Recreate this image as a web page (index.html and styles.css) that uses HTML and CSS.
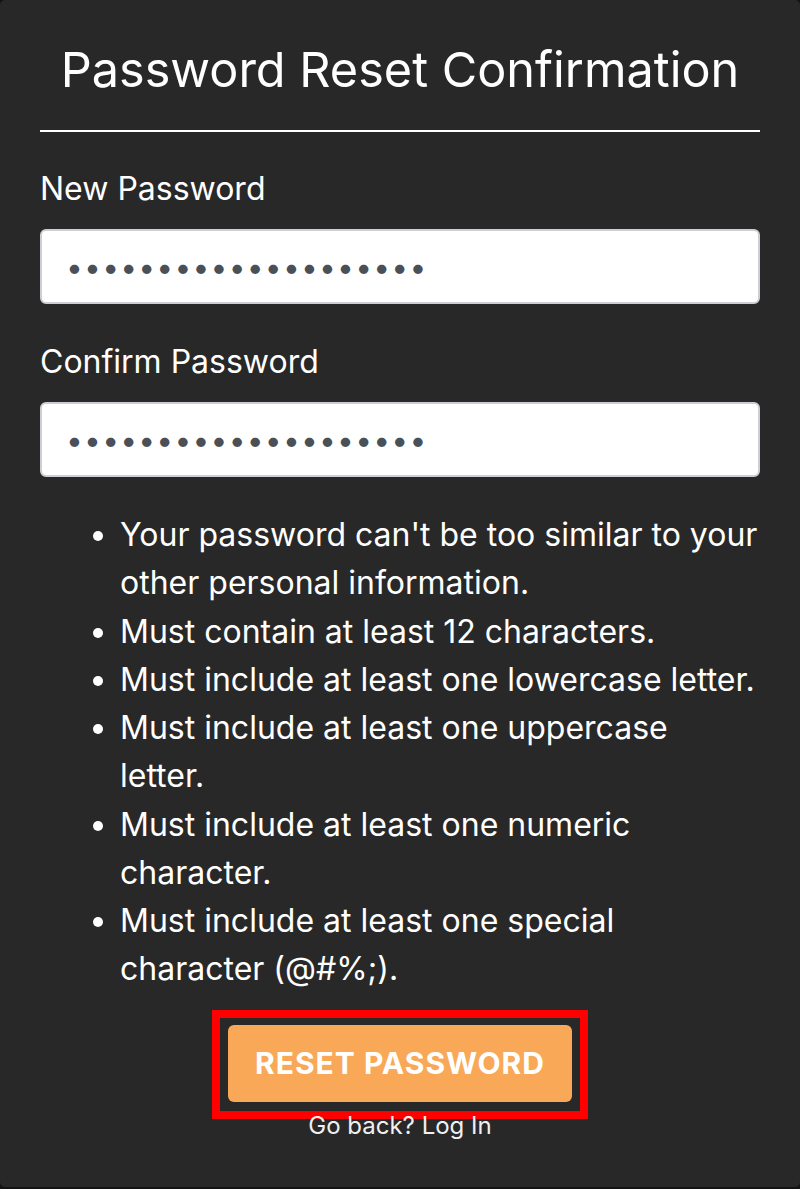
FILE: index.html
```html
<!DOCTYPE html>
<html lang="en">
<head>
<meta charset="utf-8">
<title>Password Reset Confirmation</title>
<link rel="stylesheet" href="styles.css">
</head>
<body>
<main class="card">
  <h1 class="title">Password Reset Confirmation</h1>
  <hr class="rule">
  <form class="form">
    <label class="label" for="p1">New Password</label>
    <input class="input" id="p1" type="password" value="aaaaaaaaaaaaaaaaaaaa">
    <label class="label" for="p2">Confirm Password</label>
    <input class="input" id="p2" type="password" value="aaaaaaaaaaaaaaaaaaaa">
    <ul class="rules">
      <li>Your password can't be too similar to your other personal information.</li>
      <li>Must contain at least 12 characters.</li>
      <li>Must include at least one lowercase letter.</li>
      <li>Must include at least one uppercase letter.</li>
      <li>Must include at least one numeric character.</li>
      <li>Must include at least one special character (@#%;).</li>
    </ul>
    <div class="actions">
      <div class="highlight">
        <button class="btn" type="button">RESET PASSWORD</button>
      </div>
      <a class="back" href="#">Go back? Log In</a>
    </div>
  </form>
</main>
</body>
</html>
```

FILE: styles.css
```css
* { box-sizing: border-box; }
html, body { margin: 0; padding: 0; }
body {
  background: #151210;
  font-family: Inter, "Noto Sans", sans-serif;
  color: #ffffff;
  height: 1189px;
}
.card {
  background: #282828;
  border-radius: 5px;
  height: 1187px;
  padding: 36px 40px 0;
  display: flex;
  flex-direction: column;
}
.title {
  margin: 0;
  text-align: center;
  font-size: 48.6px;
  font-weight: 400;
  line-height: 68px;
}
.rule {
  border: 0;
  border-top: 2px solid #ffffff;
  margin: 26px 0 0;
}
.form {
  display: flex;
  flex-direction: column;
}
.label {
  font-size: 32px;
  margin-top: 34px;
  line-height: 48px;
}
.rule + .form .label:first-child { margin-top: 33px; }
.input {
  margin-top: 16px;
  height: 75px;
  border: 2px solid #ccced3;
  border-radius: 6px;
  background: #fff;
  padding: 0 24px;
  font-size: 30px;
  color: #495057;
  letter-spacing: 1.2px;
  font-family: Inter, sans-serif;
}
.rules {
  margin: 34px 0 0;
  padding-left: 80px;
  font-size: 32px;
  line-height: 48.25px;
}
.actions {
  display: flex;
  flex-direction: column;
  align-items: center;
  margin-top: 16px;
}
.highlight {
  border: 8px solid #ff0000;
  padding: 7px 8px 9px;
  margin-bottom: -16px;
}
.btn {
  display: block;
  width: 344px;
  height: 77px;
  background: #f9a857;
  color: #fff;
  border: 0;
  border-radius: 6px;
  font-family: Inter, sans-serif;
  font-weight: 700;
  font-size: 30px;
  letter-spacing: 1px;
}
.back {
  position: relative;
  color: #f0f0f0;
  text-decoration: none;
  font-size: 24px;
  line-height: 36px;
  margin-top: 5px;
}
```
